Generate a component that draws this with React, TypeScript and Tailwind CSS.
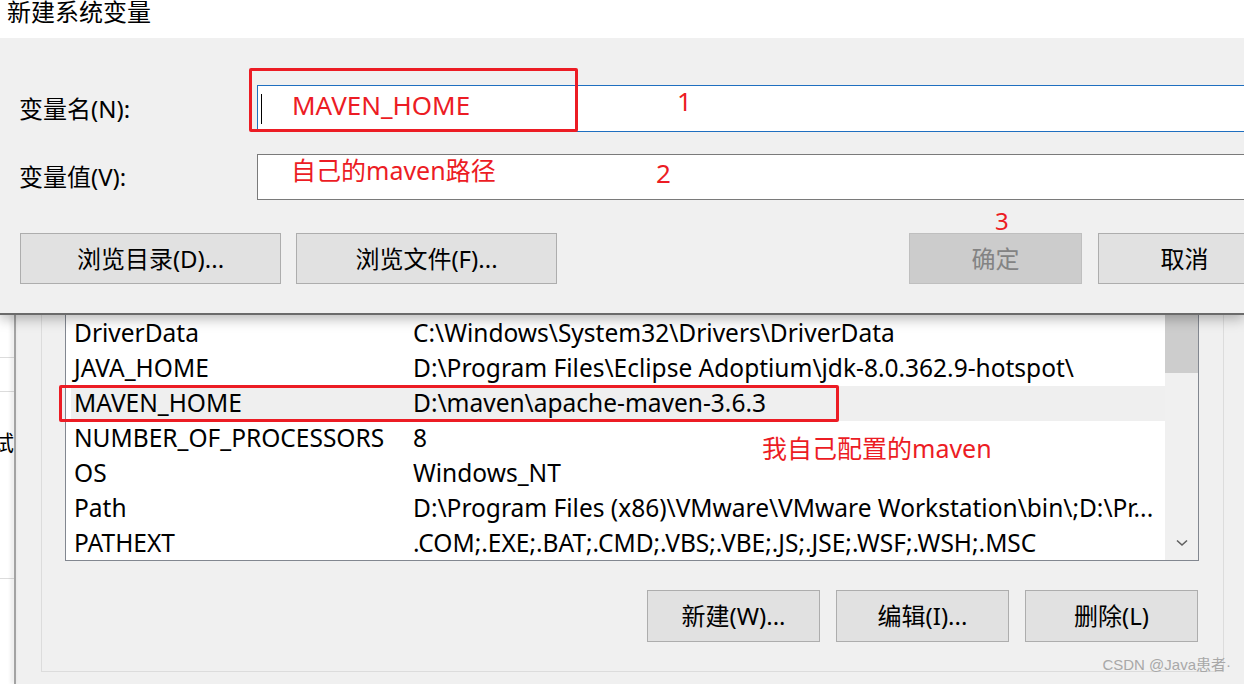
import React from "react";

const ROWS: [string, string][] = [
  ["ComSpec", "C:\\Windows\\system32\\cmd.exe"],
  ["DriverData", "C:\\Windows\\System32\\Drivers\\DriverData"],
  ["JAVA_HOME", "D:\\Program Files\\Eclipse Adoptium\\jdk-8.0.362.9-hotspot\\"],
  ["MAVEN_HOME", "D:\\maven\\apache-maven-3.6.3"],
  ["NUMBER_OF_PROCESSORS", "8"],
  ["OS", "Windows_NT"],
  ["Path", "D:\\Program Files (x86)\\VMware\\VMware Workstation\\bin\\;D:\\Pr"],
  ["PATHEXT", ".COM;.EXE;.BAT;.CMD;.VBS;.VBE;.JS;.JSE;.WSF;.WSH;.MSC"],
];

function WinButton({
  label,
  className = "",
  disabled = false,
}: {
  label: string;
  className?: string;
  disabled?: boolean;
}) {
  return (
    <button
      type="button"
      className={
        disabled
          ? `flex h-full shrink-0 items-center justify-center border border-[#bfbfbf] bg-[#cccccc] text-[24px] text-[#838383] ${className}`
          : `flex h-full shrink-0 items-center justify-center border border-[#adadad] bg-[#e1e1e1] text-[24px] text-black ${className}`
      }
    >
      {label}
    </button>
  );
}

export default function App() {
  return (
    <div className="relative flex h-[684px] w-[1244px] flex-col overflow-hidden bg-[#f0f0f0] font-['Noto_Sans','Noto_Sans_CJK_SC',sans-serif] text-black">
      {/* foreground dialog: 新建系统变量 */}
      <div className="relative z-10 flex flex-col shadow-[0_4px_12px_rgba(0,0,0,0.28)]">
        <div className="h-[38px] bg-white pl-[7px]">
          <div className="-mt-[3px] text-[24px] leading-[30px]">新建系统变量</div>
        </div>
        <div className="flex h-[275px] flex-col overflow-hidden bg-[#f0f0f0] pt-[47px]">
          <div className="flex h-[47px] items-center">
            <div className="w-[257px] shrink-0 pl-[19px] text-[24px]">变量名(N):</div>
            <div className="-mr-[4px] flex h-full flex-1 items-center border border-[#1f6fc0] bg-white pl-[3px]">
              <div className="h-[30px] w-[1px] bg-black" />
            </div>
          </div>
          <div className="mt-[22px] flex h-[46px] items-center">
            <div className="w-[257px] shrink-0 pl-[19px] text-[24px]">变量值(V):</div>
            <div className="-mr-[4px] h-full flex-1 border border-[#7a7a7a] bg-white" />
          </div>
          <div className="mt-[33px] flex h-[51px] pl-[20px]">
            <WinButton label="浏览目录(D)..." className="w-[261px]" />
            <WinButton label="浏览文件(F)..." className="ml-[15px] w-[261px]" />
            <WinButton label="确定" disabled className="ml-[352px] w-[173px]" />
            <WinButton label="取消" className="ml-[16px] w-[173px]" />
          </div>
        </div>
        <div className="h-[2px] bg-[#6b6b6b]" />
      </div>

      {/* background window: 环境变量 */}
      <div className="flex h-[369px]">
        <div className="flex w-[14px] flex-col overflow-hidden bg-white">
          <div className="h-[43px] shrink-0 border-b border-[#dcdcdc]" />
          <div className="h-[34px] shrink-0 border-b border-[#dcdcdc]" />
          <div className="flex h-[62px] shrink-0 items-end justify-end whitespace-nowrap text-[22px] leading-[24px]">
            测试
          </div>
          <div className="h-[125px] shrink-0 border-b border-[#dcdcdc]" />
        </div>
        <div className="w-[2px] bg-[#a3a3a3] shadow-[-2px_0_4px_rgba(0,0,0,0.18)]" />
        <div className="relative flex-1 pl-[25px]">
          <div className="flex h-[357px] w-[1183px] flex-col border-x border-b border-[#dcdcdc] pl-[23px] pr-[24px]">
            <div className="flex h-[246px] overflow-hidden border-x border-b border-[#828790] bg-white">
              <div className="-mt-[34px] flex min-w-0 flex-1 flex-col pl-[5px] text-[24.5px]">
                {ROWS.map(([name, value]) => (
                  <div
                    key={name}
                    className={
                      name === "MAVEN_HOME"
                        ? "flex h-[35px] shrink-0 items-center bg-[#efefef]"
                        : "flex h-[35px] shrink-0 items-center"
                    }
                  >
                    <div className="w-[342px] shrink-0 whitespace-nowrap pl-[3px]">{name}</div>
                    <div className="min-w-0 flex-1 truncate pr-[4px]">
                      {name === "Path" ? value + "..." : value}
                    </div>
                  </div>
                ))}
              </div>
              <div className="flex w-[33px] shrink-0 flex-col justify-between bg-[#f0f0f0]">
                <div className="h-[58px] bg-[#cdcdcd]" />
                <svg className="mb-[13px] ml-[11px]" width="12" height="8" viewBox="0 0 12 8">
                  <path d="M1 1.5 L6 6 L11 1.5" fill="none" stroke="#606060" strokeWidth="1.6" />
                </svg>
              </div>
            </div>
            <div className="mt-[29px] flex h-[52px] justify-end gap-[16px] pr-[1px]">
              <WinButton label="新建(W)..." className="w-[173px]" />
              <WinButton label="编辑(I)..." className="w-[173px]" />
              <WinButton label="删除(L)" className="w-[173px]" />
            </div>
          </div>
          <div className="absolute bottom-[8px] right-[13px] font-['Liberation_Sans','Noto_Sans_CJK_SC',sans-serif] text-[15px] text-[#a8a8a8]">
            CSDN @Java患者·
          </div>
        </div>
      </div>

      {/* red annotations drawn over the screenshot */}
      <div className="absolute left-[249px] top-[68px] z-20 h-[64px] w-[329px] rounded-[2px] border-[3px] border-[#ec1c24]" />
      <div className="absolute left-[59px] top-[385px] z-20 h-[37px] w-[780px] rounded-[2px] border-[3px] border-[#ec1c24]" />
      <div className="absolute left-[292px] top-[89px] z-20 text-[26px] leading-[32px] text-[#ec1c24]">MAVEN_HOME</div>
      <div className="absolute left-[291px] top-[154px] z-20 text-[25px] leading-[32px] text-[#ec1c24]">自己的maven路径</div>
      <div className="absolute left-[677px] top-[85px] z-20 text-[26px] leading-[32px] text-[#ec1c24]">1</div>
      <div className="absolute left-[656px] top-[157px] z-20 text-[26px] leading-[32px] text-[#ec1c24]">2</div>
      <div className="absolute left-[995px] top-[206px] z-20 text-[24px] leading-[30px] text-[#ec1c24]">3</div>
      <div className="absolute left-[762px] top-[432px] z-20 text-[25px] leading-[32px] text-[#ec1c24]">我自己配置的maven</div>
    </div>
  );
}
